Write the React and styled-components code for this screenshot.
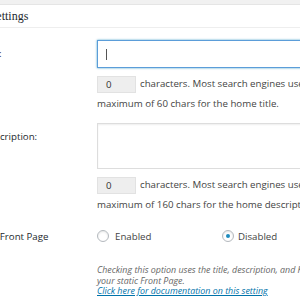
import styled, { createGlobalStyle } from "styled-components";

const GlobalStyle = createGlobalStyle`
  html, body {
    margin: 0;
    padding: 0;
    background: #f1f1f1;
    overflow: hidden;
  }
  body {
    font-family: "Open Sans", "Liberation Sans", sans-serif;
    font-size: 9.7px;
    color: #444;
  }
`;

const Postbox = styled.div`
  margin: 4px 0 0 -70px;
  width: 440px;
  background: #fff;
  border: 1px solid #e5e5e5;
  height: 400px;
`;

const Header = styled.h3`
  margin: 0;
  padding-left: 0;
  height: 22px;
  line-height: 22px;
  font-family: "Liberation Serif", "Times New Roman", serif;
  font-size: 12px;
  font-weight: 400;
  color: #23282d;
  border-bottom: 1px solid #eee;
`;

const Body = styled.div`
  padding-top: 12px;
`;

const Row = styled.div`
  display: grid;
  grid-template-columns: 166px 240px;
  margin-bottom: 9px;
`;

const Label = styled.div`
  padding-left: ${(p) => p.$left || 22}px;
  padding-top: ${(p) => p.$top || 7}px;
  line-height: 13px;
  color: #23282d;
  white-space: nowrap;
`;

const Field = styled.div`
  display: flex;
  flex-direction: column;
`;

const TextInput = styled.div`
  height: 28px;
  box-sizing: border-box;
  border: 1px solid #5b9dd9;
  box-shadow: 0 0 2px rgba(30, 140, 190, 0.8);
  display: flex;
  align-items: center;
  padding-left: 8px;
  background: #fff;
`;

const Caret = styled.span`
  width: 1px;
  height: 11px;
  background: #555;
`;

const TextArea = styled.div`
  height: 46px;
  box-sizing: border-box;
  border: 1px solid #ddd;
  box-shadow: inset 0 1px 2px rgba(0, 0, 0, 0.07);
  background: #fff;
`;

const Counter = styled.p`
  margin: 6px 0 0;
  line-height: 20px;
  color: #444;
`;

const CountBox = styled.span`
  display: inline-block;
  vertical-align: middle;
  box-sizing: border-box;
  width: 39px;
  height: 17px;
  line-height: 15px;
  padding-left: 8px;
  margin-right: 4px;
  background: #eee;
  border: 1px solid #e2e2e2;
  color: #333;
`;

const RadioGroup = styled.div`
  display: grid;
  grid-template-columns: 125px 125px;
  height: 24px;
  align-items: center;
`;

const Option = styled.label`
  display: flex;
  align-items: center;
  gap: ${(p) => (p.$checked ? 4 : 6)}px;
  color: #444;
`;

const Radio = styled.span`
  width: 12px;
  height: 12px;
  box-sizing: border-box;
  border-radius: 50%;
  border: 1px solid #b4b9be;
  box-shadow: inset 0 1px 2px rgba(0, 0, 0, 0.1);
  background: #fff;
  display: flex;
  align-items: center;
  justify-content: center;

  &::after {
    content: "";
    display: ${(p) => (p.$checked ? "block" : "none")};
    width: 4px;
    height: 4px;
    border-radius: 50%;
    background: #1e8cbe;
  }
`;

const Help = styled.div`
  margin-top: 17px;
  font-size: 8.9px;
  font-style: italic;
  line-height: 10.6px;
  color: #666;
  white-space: nowrap;

  a {
    color: #0073aa;
    text-decoration: underline;
  }
`;

export default function App() {
  return (
    <>
      <GlobalStyle />
      <Postbox>
        <Header>Home Page Settings</Header>
        <Body>
          <Row>
            <Label $left={19}>Home Title:</Label>
            <Field>
              <TextInput>
                <Caret />
              </TextInput>
              <Counter>
                <CountBox>0</CountBox>
                characters. Most search engines use a maximum of 60 chars for
                the home title.
              </Counter>
            </Field>
          </Row>
          <Row>
            <Label>Home Description:</Label>
            <Field>
              <TextArea />
              <Counter>
                <CountBox>0</CountBox>
                characters. Most search engines use a maximum of 160 chars for
                the home description.
              </Counter>
            </Field>
          </Row>
          <Row>
            <Label $top={6}>Use Static Front Page</Label>
            <Field>
              <RadioGroup>
                <Option>
                  <Radio />
                  Enabled
                </Option>
                <Option $checked>
                  <Radio $checked />
                  Disabled
                </Option>
              </RadioGroup>
              <Help>
                Checking this option uses the title, description, and Keywords
                set here on your homepage instead of those of
                <br />
                your static Front Page.
                <br />
                <a href="#">Click here for documentation on this setting</a>
              </Help>
            </Field>
          </Row>
        </Body>
      </Postbox>
    </>
  );
}
